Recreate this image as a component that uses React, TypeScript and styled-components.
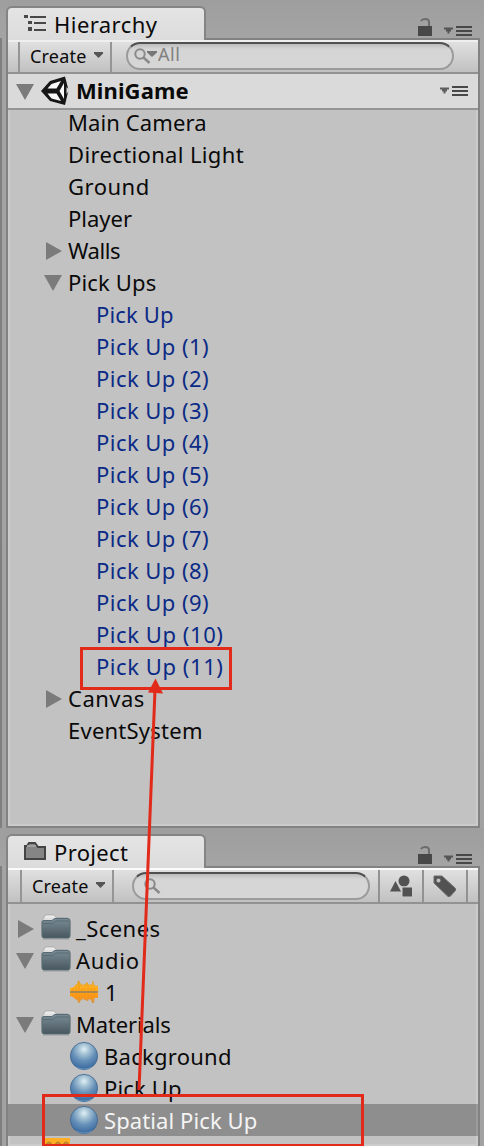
import React from 'react';
import styled, { createGlobalStyle, css } from 'styled-components';

const Global = createGlobalStyle`
  * { box-sizing: border-box; }
  html, body { margin: 0; padding: 0; background: #a2a2a2; overflow: hidden; }
  svg { display: block; flex: none; }
`;

const Page = styled.div`
  position: relative;
  width: 484px;
  height: 1146px;
  overflow: hidden;
  background: #a2a2a2;
  font-family: "Noto Sans", "Open Sans", sans-serif;
  font-size: 22px;
  color: #0a0a0a;
  display: flex;
  flex-direction: column;
`;

const Dock = styled.section<{ $height: number; $gap: number }>`
  flex: none;
  height: ${p => p.$height}px;
  padding: ${p => p.$gap}px 4px 0 6px;
  display: flex;
  flex-direction: column;
  background: linear-gradient(#7f7f7f, #7f7f7f) 0 38px / 2px 100% no-repeat, linear-gradient(#9e9e9e, #a4a4a4 38px, #a2a2a2);
`;

const TabBar = styled.header`
  flex: none;
  height: 32px;
  display: flex;
  justify-content: space-between;
`;

const Tab = styled.div`
  width: 200px;
  height: 34px;
  padding: 0 0 1px 16px;
  display: flex;
  align-items: center;
  border: 2px solid #848484;
  border-bottom: 0;
  border-radius: 6px 6px 0 0;
  background: linear-gradient(#e4e4e4, #dcdcdc);
  z-index: 1;
`;

const TabIcon = styled.span`
  width: 30px;
  height: 26px;
  flex: none;
`;

const TabTools = styled.div`
  display: flex;
  align-items: flex-end;
  gap: 12px;
  padding: 0 8px 1px 0;
`;

const Panel = styled.div<{ $open?: boolean }>`
  flex: 1;
  min-height: 0;
  display: flex;
  flex-direction: column;
  border: 2px solid #828282;
  ${p => p.$open && css`border-bottom: 0;`}
  background: #c2c2c2;
`;

const Toolbar = styled.div<{ $height: number; $lit: string }>`
  flex: none;
  height: ${p => p.$height}px;
  display: flex;
  overflow: hidden;
  border-top: 2px solid ${p => p.$lit};
  border-bottom: 2px solid #929292;
  background: linear-gradient(#e0e0e0, #c1c1c1);
`;

const CreateButton = styled.div<{ $indent: number; $lift?: number }>`
  flex: none;
  width: 94px;
  margin-left: ${p => p.$indent}px;
  padding: 0 7px ${p => p.$lift ?? 2}px 10px;
  display: flex;
  align-items: center;
  justify-content: space-between;
  border: 2px solid #959595;
  border-width: 0 2px;
  font-size: 18px;
  letter-spacing: 0.2px;
`;

const SearchField = styled.div<{ $width: number; $left: number; $top?: number }>`
  flex: none;
  width: ${p => p.$width}px;
  height: 28px;
  margin: ${p => p.$top ?? 0}px 0 0 ${p => p.$left}px;
  padding-left: 6px;
  display: flex;
  align-items: center;
  border: 2px solid #9b9b9b;
  border-top-color: #505050;
  border-radius: 14px;
  background: linear-gradient(#bcbcbc, #d5d5d5 5px, #d6d6d6);
  font-size: 18px;
  color: #808080;
`;

const Hint = styled.span`
  margin-top: -4px;
  letter-spacing: 0.6px;
`;

const FilterButton = styled.div`
  flex: 0 0 44px;
  display: flex;
  align-items: center;
  justify-content: center;
  border-left: 2px solid #929292;
`;

const SceneHeader = styled.div`
  flex: none;
  height: 36px;
  padding: 0 10px 0 8px;
  display: flex;
  align-items: center;
  border-bottom: 2px solid #959595;
  background: #dadada;
  font-weight: 700;
`;

const SceneName = styled.span`
  flex: 1;
  margin: -2px 0 0 6px;
  letter-spacing: 0.1px;
`;

const edge = 'linear-gradient(#cbcbcb, #cbcbcb)';

const Tree = styled.div<{ $shift: number }>`
  flex: 1;
  min-height: 0;
  padding-top: ${p => p.$shift}px;
  background: ${edge} 0 0 / 2px 100% no-repeat, ${edge} 100% 0 / 2px 100% no-repeat, ${edge} 0 100% / 100% 2px no-repeat;
`;

const Row = styled.div<{ $selected?: boolean; $tone?: string; $pull?: number }>`
  height: 32px;
  margin-top: ${p => p.$pull ?? 0}px;
  display: flex;
  align-items: center;
  color: ${p => p.$tone ?? '#0a0a0a'};
  ${p => p.$selected && css`
    background: #8e8e8e;
    box-shadow: inset -2px 0 #9b9b9b;
    color: #f4f4f4;
  `}
`;

const ArrowSlot = styled.span<{ $indent: number }>`
  flex: none;
  width: ${p => p.$indent}px;
  display: flex;
  justify-content: flex-end;
  align-items: center;
`;

const Label = styled.span<{ $spacing?: number; $gap?: number }>`
  padding-left: ${p => p.$gap ?? 6}px;
  white-space: pre;
  line-height: 32px;
  letter-spacing: ${p => p.$spacing ?? 0.3}px;
`;

const Annotations = styled.svg`
  position: absolute;
  left: 0;
  top: 0;
  z-index: 2;
`;

const Fold = ({ open }: { open?: boolean }) => (
  <svg width="18" height="20" viewBox="0 -2 18 20" fill="#7b7b7b">
    {open ? <path d="M0 1h18L9 17z" /> : <path d="M2 0v18L18 9z" />}
  </svg>
);

const MenuIcon = () => (
  <svg width="28" height="12" viewBox="0 0 28 12" fill="#484848">
    <path d="M0 2.500h9v2H7v2H5.500v2h-2v-2H2v-2H0z" opacity=".85" />
    <path d="M12 1h16v2H12zM12 5h16v2H12zM12 9h16v2H12z" />
  </svg>
);

const LockIcon = () => (
  <svg width="14" height="20" viewBox="0 0 14 20">
    <path d="M3 4Q4 2 7 2Q11 2 11 5V9" fill="none" stroke="#6c6c6c" strokeWidth="2" />
    <path d="M0 9h14v10H0z" fill="#484848" />
  </svg>
);

const HierarchyIcon = () => (
  <svg width="24" height="26" viewBox="0 1 24 26" fill="#484848">
    <path d="M0 5h4v3H0zM6 6h16v2H6zM4 11h4v3H4zM10 12h12v2H10zM4 17h4v4H4zM10 19h12v2H10z" />
  </svg>
);

const TabFolderIcon = () => (
  <svg width="24" height="26" viewBox="0 0 24 26">
    <path d="M1 20V7h2l2-3h6l3 4h7v12z" fill="#858585" stroke="#444" strokeWidth="2" />
    <path d="M3 7h9" stroke="#a0a0a0" strokeWidth="2" />
  </svg>
);

const Caret = () => (
  <svg width="9" height="8" viewBox="0 0 9 8"><path d="M0 0h9v1.500L4.500 6L0 1.500z" fill="#555" /></svg>
);

const SearchIcon = ({ menu }: { menu?: boolean }) => (
  <svg width={menu ? 24 : 22} height="18" viewBox={menu ? '0 0 24 18' : '-4 0 22 18'}>
    <circle cx="6" cy="7" r="4.700" fill="none" stroke="#8a8a8a" strokeWidth="2" />
    <path d="M9.500 10.500l6 5.500" stroke="#8a8a8a" strokeWidth="2.500" />
    {menu && <path d="M13 4h10v1.500L18 10l-5-4.500z" fill="#777" />}
  </svg>
);

const UnityIcon = () => (
  <svg width="29" height="30" viewBox="0 0 29 30">
    <path d="M0 15L9 5L24 0.500L27.500 14L24 29L9 25z" fill="#161616" />
    <path d="M10.500 8L20 5L15.500 12.500H6.500zM6.500 17.500h9L20 25L10.500 22.500zM18.500 15L23 7v16z" fill="#fafafa" />
    <path d="M25.500 11L28.500 14L25.500 18z" fill="#dadada" />
  </svg>
);

const ShapesIcon = () => (
  <svg width="22" height="22" viewBox="0 0 22 22" fill="#525252">
    <circle cx="14" cy="6" r="5.500" />
    <path d="M5.500 6L11 16.500H0z" />
    <path d="M12 12h11v10H12z" stroke="#cecece" />
  </svg>
);

const TagIcon = () => (
  <svg width="24" height="24" viewBox="0 0 24 24">
    <path d="M1 2h8L22.500 14.500V16.500L17 22.500H15L1 9z" fill="#525252" stroke="#6d6d6d" strokeLinejoin="round" />
    <circle cx="5.500" cy="6.500" r="2.300" fill="#c4c4c4" stroke="#666" />
  </svg>
);

const FolderIcon = () => (
  <svg width="30" height="28" viewBox="0 0 30 28">
    <defs>
      <linearGradient id="folder" x2="0" y2="1">
        <stop offset="0" stopColor="#7b8c94" /><stop offset="1" stopColor="#48575f" />
      </linearGradient>
      <linearGradient id="flap" x2="0" y2="1">
        <stop offset="0" stopColor="#f2f2f2" /><stop offset="1" stopColor="#999" />
      </linearGradient>
    </defs>
    <path d="M1 7L4 1.500Q4.500 1 6 1H12Q13 1 14 2L15 3.500H26Q28.500 4 29 8V20H1z" fill="url(#flap)" stroke="#999" strokeWidth=".6" />
    <path d="M1 8Q1 6.500 3 6.500H11L13.500 4.500H27Q29 4.500 29 7V22Q29 24 27 24H3Q1 24 1 22z" fill="url(#folder)" stroke="#566a73" />
    <path d="M2 9.500H12L14.500 7H28" fill="none" stroke="#566c76" />
    <path d="M2 25H28" stroke="#888" opacity=".6" />
  </svg>
);

const AudioIcon = () => (
  <svg width="28" height="24" viewBox="0 0 28 24">
    <defs>
      <linearGradient id="wave" x2="0" y2="1">
        <stop offset="0" stopColor="#d99a2c" /><stop offset=".3" stopColor="#ffb01f" /><stop offset=".7" stopColor="#ff9717" /><stop offset="1" stopColor="#d4944c" />
      </linearGradient>
    </defs>
    <path d="M0 8L4 7L5 5L7 4L8 .5H9L10 2.500L11 4L13 5L15 4L17 2L19 5L21 4L22 5L22.500 1H23.500L24 5L28 6V18L24.500 18L24 23H22L21 20L19 19L18 21H17L15 20L13 19L11 20L9.500 23H8.500L7 20L5 19L3 17L0 16z" fill="url(#wave)" />
    <path d="M3 8v8M6 7v10M9 5v14M12 8v9M15 8v9M18 7v11M21 8v9M24 8v9" stroke="#ef940f" strokeWidth=".8" />
    <path d="M0 12H28" stroke="#877e68" strokeWidth="1.400" />
  </svg>
);

const MaterialIcon = () => (
  <svg width="30" height="30" viewBox="0 0 30 30">
    <defs>
      <radialGradient id="ball" cx=".5" cy=".25" r=".72">
        <stop offset="0" stopColor="#e2eff4" /><stop offset=".25" stopColor="#a8c5d6" /><stop offset=".6" stopColor="#6690b8" /><stop offset="1" stopColor="#3c6ba0" />
      </radialGradient>
    </defs>
    <circle cx="15" cy="15" r="13.600" fill="url(#ball)" stroke="#466a90" strokeWidth=".9" />
    <path d="M7 26Q15 30 23 26" fill="none" stroke="#72aad8" opacity=".6" />
  </svg>
);

const MixerIcon = () => (
  <svg width="28" height="28" viewBox="0 0 28 28">
    <path d="M1 0h27v28H1z" fill="#ffad22" />
    <path d="M5 8v-2q2-3 4 0v2M14 8v-2q2-3 4 0v2M22 8v-2q2-3 4 0v2" fill="none" stroke="#ba8429" strokeWidth="2" />
  </svg>
);

const PREFAB = '#0b2a86';

const hierarchy: { name: string; fold?: 'open' | 'closed'; spacing?: number }[] = [
  { name: 'Main Camera', spacing: 0.1 },
  { name: 'Directional Light', spacing: 0.36 },
  { name: 'Ground', spacing: 0.5 },
  { name: 'Player', spacing: 0 },
  { name: 'Walls', fold: 'closed', spacing: -0.4 },
  { name: 'Pick Ups', fold: 'open', spacing: 0.17 },
];

const prefabs = ['Pick Up', ...Array.from({ length: 11 }, (_, i) => `Pick Up (${i + 1})`)];

const prefabSpacing = (i: number) => (i === 0 ? 0.17 : i < 10 ? 0.45 : 0.56);

const Tools = () => (
  <TabTools>
    <LockIcon />
    <MenuIcon />
  </TabTools>
);

export default function App() {
  return (
    <Page>
      <Global />
      <Dock $height={828} $gap={6}>
        <TabBar>
          <Tab><TabIcon><HierarchyIcon /></TabIcon><Label $gap={0} $spacing={0.45}>Hierarchy</Label></Tab>
          <Tools />
        </TabBar>
        <Panel>
          <Toolbar $height={34} $lit="#efefef">
            <CreateButton $indent={10}>Create<Caret /></CreateButton>
            <SearchField $width={328} $left={14}>
              <SearchIcon menu /><Hint>All</Hint>
            </SearchField>
          </Toolbar>
          <SceneHeader>
            <Fold open />
            <ArrowSlot $indent={36}><UnityIcon /></ArrowSlot>
            <SceneName>MiniGame</SceneName>
            <MenuIcon />
          </SceneHeader>
          <Tree $shift={0}>
            {hierarchy.map((n, i) => (
              <Row key={n.name} $pull={i === 0 ? -4 : 0}>
                <ArrowSlot $indent={54}>{n.fold && <Fold open={n.fold === 'open'} />}</ArrowSlot>
                <Label $spacing={n.spacing}>{n.name}</Label>
              </Row>
            ))}
            {prefabs.map((n, i) => (
              <Row key={n} $tone={PREFAB}><ArrowSlot $indent={82} /><Label $spacing={prefabSpacing(i)}>{n}</Label></Row>
            ))}
            <Row><ArrowSlot $indent={54}><Fold /></ArrowSlot><Label $spacing={0.5}>Canvas</Label></Row>
            <Row><ArrowSlot $indent={54} /><Label $spacing={0.24}>EventSystem</Label></Row>
          </Tree>
        </Panel>
      </Dock>
      <Dock $height={318} $gap={6}>
        <TabBar>
          <Tab><TabIcon><TabFolderIcon /></TabIcon><Label $gap={0} $spacing={0.35}>Project</Label></Tab>
          <Tools />
        </TabBar>
        <Panel $open>
          <Toolbar $height={36} $lit="#fafafa">
            <CreateButton $indent={12} $lift={0}>Create<Caret /></CreateButton>
            <SearchField $width={238} $left={18} $top={2}><SearchIcon /></SearchField>
            <ArrowSlot $indent={8} />
            <FilterButton><ShapesIcon /></FilterButton>
            <FilterButton><TagIcon /></FilterButton>
            <FilterButton />
          </Toolbar>
          <Tree $shift={8}>
            <Row><ArrowSlot $indent={26}><Fold /></ArrowSlot><ArrowSlot $indent={37}><FolderIcon /></ArrowSlot><Label $gap={5} $spacing={0.45}>_Scenes</Label></Row>
            <Row><ArrowSlot $indent={26}><Fold open /></ArrowSlot><ArrowSlot $indent={37}><FolderIcon /></ArrowSlot><Label $gap={5} $spacing={0.7}>Audio</Label></Row>
            <Row><ArrowSlot $indent={90}><AudioIcon /></ArrowSlot><Label $gap={7}>1</Label></Row>
            <Row><ArrowSlot $indent={26}><Fold open /></ArrowSlot><ArrowSlot $indent={37}><FolderIcon /></ArrowSlot><Label $gap={5} $spacing={-0.15}>Materials</Label></Row>
            <Row><ArrowSlot $indent={91}><MaterialIcon /></ArrowSlot><Label $gap={5} $spacing={0.25}>Background</Label></Row>
            <Row><ArrowSlot $indent={91}><MaterialIcon /></ArrowSlot><Label $gap={5} $spacing={0.17}>Pick Up</Label></Row>
            <Row $selected><ArrowSlot $indent={91}><MaterialIcon /></ArrowSlot><Label $gap={5} $spacing={0.1}>Spatial Pick Up</Label></Row>
            <Row><ArrowSlot $indent={62}><MixerIcon /></ArrowSlot></Row>
          </Tree>
        </Panel>
      </Dock>
      <Annotations width="484" height="1146" viewBox="0 0 484 1146" fill="none" stroke="#e22a1b" strokeWidth="3">
        <path d="M81.500 648.500h149v40h-149z" />
        <path d="M43.500 1095.500h319v50h-319z" />
        <path d="M139 1090L155 690" />
        <path d="M155.500 678.500L163 693.500L148 692.500z" fill="#e22a1b" stroke="none" />
      </Annotations>
    </Page>
  );
}
